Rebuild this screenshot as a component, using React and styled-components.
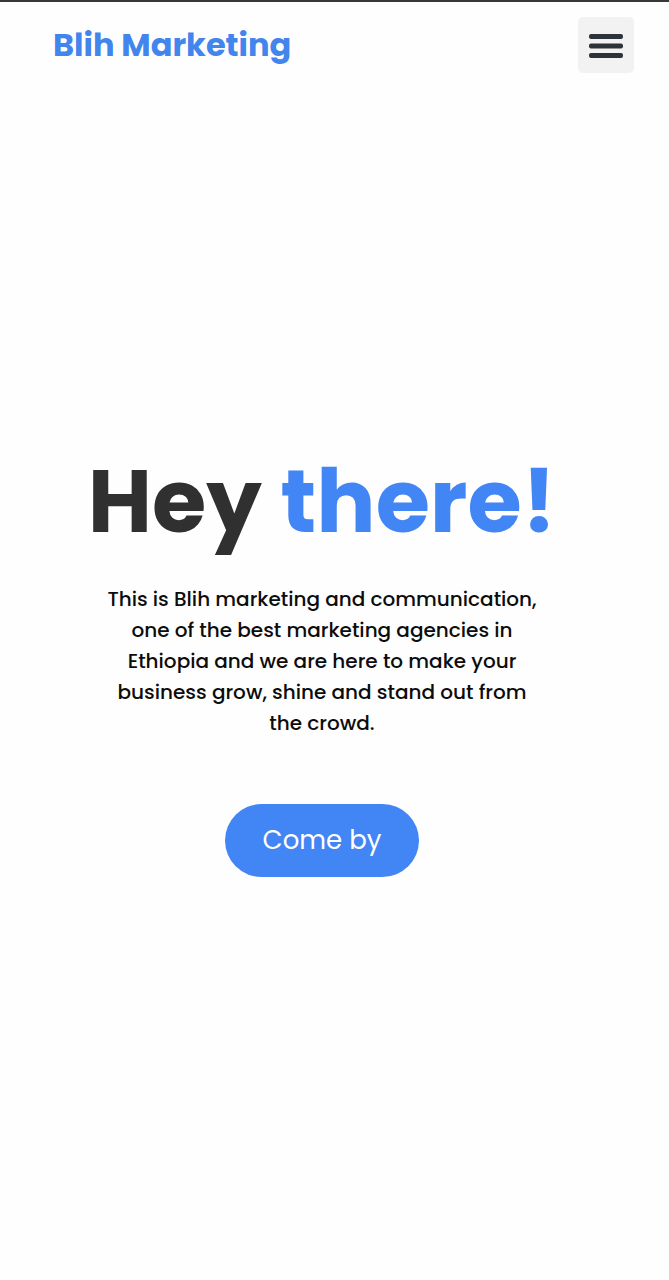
import React from "react";
import styled, { createGlobalStyle } from "styled-components";

const GlobalStyle = createGlobalStyle`
  *, *::before, *::after { box-sizing: border-box; }
  body {
    margin: 0;
    background: #fefefe;
    color: #0c0c0c;
    font-family: Poppins, Inter, "Liberation Sans", sans-serif;
  }
`;

const Page = styled.div`
  display: flex;
  flex-direction: column;
  min-height: 100vh;
  border-top: 2px solid #383838;
`;

const Header = styled.header`
  display: flex;
  align-items: center;
  justify-content: space-between;
  padding: 15px 35px 16px 53px;
`;

const Brand = styled.a`
  color: #4285ec;
  font-size: 32px;
  font-weight: 700;
  line-height: 48px;
  text-decoration: none;
`;

const MenuButton = styled.button`
  display: flex;
  align-items: center;
  justify-content: center;
  width: 56px;
  height: 56px;
  padding: 0;
  border: 0;
  border-radius: 5px;
  background: #f2f2f2;
  color: #2d3338;
  cursor: pointer;
`;

const Hero = styled.main`
  flex: 1;
  display: flex;
  flex-direction: column;
  align-items: center;
  justify-content: center;
  padding: 0 90px 50px 65px;
  text-align: center;
`;

const Title = styled.h1`
  margin: 0;
  color: #303030;
  font-size: 88px;
  font-weight: 700;
  line-height: 120px;
  white-space: nowrap;
`;

const Accent = styled.span`
  color: #4285f4;
`;

const Intro = styled.p`
  max-width: 440px;
  margin: 22px 0 65px;
  font-size: 20px;
  font-weight: 500;
  line-height: 31px;
`;

const CallButton = styled.button`
  padding: 16px 38px;
  border: 0;
  border-radius: 37px;
  background: #4285f4;
  color: #fff;
  font-family: inherit;
  font-size: 26px;
  font-weight: 400;
  line-height: 41px;
  cursor: pointer;
`;

export default function App() {
  return (
    <Page>
      <GlobalStyle />
      <Header>
        <Brand href="#">Blih Marketing</Brand>
        <MenuButton type="button" aria-label="Open menu">
          <svg width="34" height="26" viewBox="0 0 34 26" fill="currentColor" aria-hidden="true">
            <rect y="2" width="34" height="5" rx="2" />
            <rect y="11.5" width="34" height="5" rx="2" />
            <rect y="21" width="34" height="5" rx="2" />
          </svg>
        </MenuButton>
      </Header>
      <Hero>
        <Title>
          Hey <Accent>there!</Accent>
        </Title>
        <Intro>
          This is Blih marketing and communication, one of the best marketing
          agencies in Ethiopia and we are here to make your business grow, shine
          and stand out from the crowd.
        </Intro>
        <CallButton type="button">Come by</CallButton>
      </Hero>
    </Page>
  );
}
